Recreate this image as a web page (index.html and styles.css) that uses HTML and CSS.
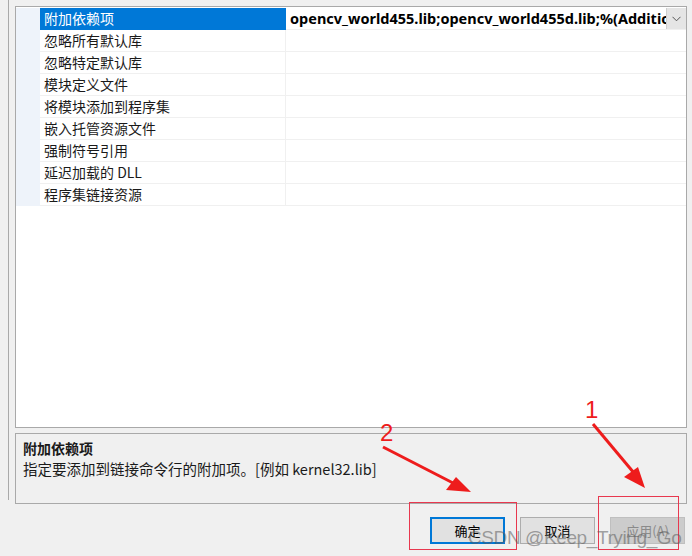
FILE: index.html
```html
<!DOCTYPE html>
<html>
<head>
    <link rel="stylesheet" href="styles.css">
</head>
<body>
    <div class="dialog">
        <div class="tree-edge"></div>
        <div class="main">
            <div class="grid">
                <div class="row selected">
                    <div class="gutter"></div>
                    <div class="name">附加依赖项</div>
                    <div class="value">
                        <span class="value-text">opencv_world455.lib;opencv_world455d.lib;%(AdditionalDependencies)</span>
                        <span class="drop">
                            <svg width="9" height="6" viewBox="0 0 9 6"><path d="M0.5 0.8 L4.5 4.8 L8.5 0.8" fill="none" stroke="#555" stroke-width="1"/></svg>
                        </span>
                    </div>
                </div>
                <div class="row"><div class="gutter"></div><div class="name">忽略所有默认库</div><div class="value"></div></div>
                <div class="row"><div class="gutter"></div><div class="name">忽略特定默认库</div><div class="value"></div></div>
                <div class="row"><div class="gutter"></div><div class="name">模块定义文件</div><div class="value"></div></div>
                <div class="row"><div class="gutter"></div><div class="name">将模块添加到程序集</div><div class="value"></div></div>
                <div class="row"><div class="gutter"></div><div class="name">嵌入托管资源文件</div><div class="value"></div></div>
                <div class="row"><div class="gutter"></div><div class="name">强制符号引用</div><div class="value"></div></div>
                <div class="row"><div class="gutter"></div><div class="name">延迟加载的 DLL</div><div class="value"></div></div>
                <div class="row"><div class="gutter"></div><div class="name">程序集链接资源</div><div class="value"></div></div>
            </div>
            <div class="desc">
                <div class="desc-title">附加依赖项</div>
                <div class="desc-text">指定要添加到链接命令行的附加项。[例如 kernel32.lib]</div>
            </div>
        </div>
    </div>
    <div class="buttons">
        <button class="btn default">确定</button>
        <button class="btn">取消</button>
        <button class="btn disabled">应用(A)</button>
    </div>

    <!-- red annotations drawn over the screenshot -->
    <svg class="marks" width="692" height="556" viewBox="0 0 692 556">
        <rect x="409.5" y="502.5" width="107" height="47" fill="none" stroke="#e8384f" stroke-width="1"/>
        <rect x="598.5" y="496.5" width="80" height="53" fill="none" stroke="#e8384f" stroke-width="1"/>
        <text x="380" y="441" class="num">2</text>
        <text x="585" y="418" class="num">1</text>
        <line x1="383" y1="447" x2="455" y2="484" stroke="#ee1c1c" stroke-width="3"/>
        <polygon points="471,492 446,490 456,477" fill="#ee1c1c"/>
        <line x1="593" y1="424" x2="634" y2="473" stroke="#ee1c1c" stroke-width="3"/>
        <polygon points="645,488 624,477 638,467" fill="#ee1c1c"/>
    </svg>
    <div class="watermark">CSDN @Keep_Trying_Go</div>
</body>
</html>
```

FILE: styles.css
```css
body {
    margin: 0;
    width: 692px;
    height: 556px;
    overflow: hidden;
    position: relative;
    background-color: #f0f0f0;
    font-family: "Noto Sans CJK SC", "Noto Sans", sans-serif;
    font-size: 14px;
    color: #1a1a1a;
}

.dialog {
    display: flex;
    height: 504px;
}

.tree-edge {
    width: 8px;
    height: 500px;
    border-right: 1px solid #a9a9a9;
}

.main {
    margin-left: 6px;
    padding-top: 6px;
    width: 672px;
}

.grid {
    height: 419px;
    background-color: #ffffff;
    border: 1px solid #a9a9a9;
    padding-top: 1px;
}

.row {
    display: flex;
    height: 22px;
}

.gutter {
    width: 24px;
    background-color: #eef3fa;
}

.name {
    width: 241px;
    padding-left: 4px;
    line-height: 21px;
    border-bottom: 1px solid #f0f0f0;
    border-right: 1px solid #f0f0f0;
    white-space: nowrap;
}

.value {
    flex: 1;
    display: flex;
    border-bottom: 1px solid #f0f0f0;
    overflow: hidden;
}

.selected .name {
    background-color: #0078d7;
    color: #ffffff;
    border-color: #0078d7;
}

.value-text {
    flex: 1;
    overflow: hidden;
    white-space: nowrap;
    padding-left: 4px;
    font-family: "Noto Sans", sans-serif;
    font-weight: bold;
    font-size: 14.5px;
    line-height: 21px;
    color: #000000;
}

.drop {
    width: 19px;
    height: 21px;
    background-color: #e5e5e5;
    border-left: 1px solid #cfcfcf;
    display: flex;
    align-items: center;
    justify-content: center;
}

.desc {
    margin-top: 5px;
    height: 71px;
    border: 1px solid #a9a9a9;
    padding: 4px 0 0 7px;
    box-sizing: border-box;
}

.desc-title {
    font-weight: bold;
    line-height: 20px;
}

.desc-text {
    font-size: 14.5px;
    line-height: 22px;
}

.buttons {
    display: flex;
    justify-content: flex-end;
    gap: 15px;
    padding-right: 7px;
    margin-top: 13px;
}

.btn {
    width: 75px;
    height: 27px;
    font-family: "Noto Sans CJK SC", sans-serif;
    font-size: 13px;
    background-color: #e1e1e1;
    border: 1px solid #adadad;
    color: #000000;
    padding: 0;
}

.btn.default {
    border: 2px solid #0078d7;
}

.btn.disabled {
    background-color: #cccccc;
    border-color: #bfbfbf;
    color: #8a8a8a;
}

.marks {
    position: absolute;
    left: 0;
    top: 0;
}

.num {
    font-family: "Liberation Sans", sans-serif;
    font-size: 24px;
    fill: #ee1c1c;
}

.watermark {
    position: absolute;
    left: 468px;
    top: 527px;
    font-family: "Liberation Sans", sans-serif;
    font-size: 19px;
    color: rgba(90, 90, 90, 0.55);
    letter-spacing: -0.4px;
}
```
